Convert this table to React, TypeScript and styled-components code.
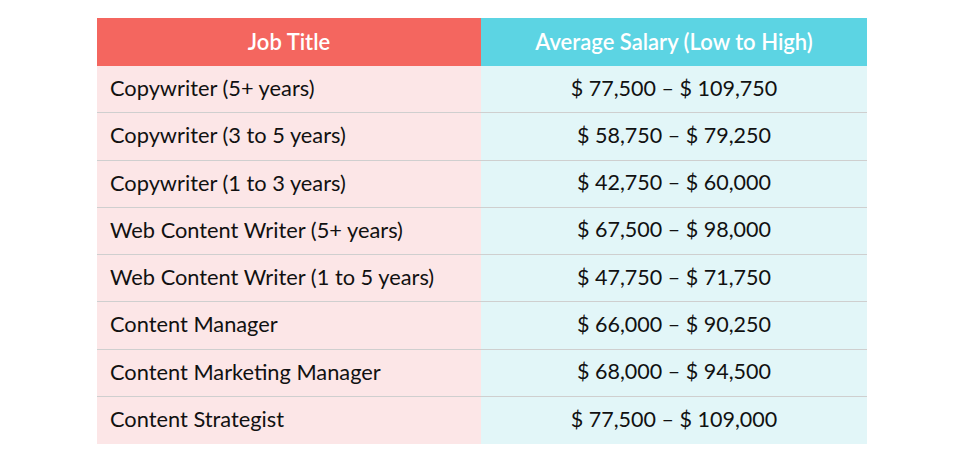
import React from "react";
import styled, { createGlobalStyle } from "styled-components";

const Global = createGlobalStyle`
  html, body { margin: 0; padding: 0; background: #ffffff; }
  body { font-family: Lato, "Open Sans", sans-serif; }
`;

const Page = styled.div`
  width: 964px;
  height: 464px;
  padding-top: 18px;
  box-sizing: border-box;
  display: flex;
  justify-content: flex-start;
  padding-left: 97px;
`;

const Table = styled.div`
  width: 770px;
  display: grid;
  grid-template-columns: 384px 386px;
  grid-template-rows: 48px repeat(8, 47.25px);
`;

const HeadCell = styled.div<{ $tone: "red" | "cyan" }>`
  background: ${(p) => (p.$tone === "red" ? "#f4665f" : "#5cd4e3")};
  color: #ffffff;
  font-weight: 600;
  font-size: 22px;
  display: flex;
  align-items: center;
  justify-content: center;
  padding-bottom: 2px;
  box-sizing: border-box;
`;

const Cell = styled.div<{ $tone: "red" | "cyan"; $last: boolean; $align: "left" | "center" }>`
  background: ${(p) => (p.$tone === "red" ? "#fce6e7" : "#e2f6f8")};
  color: #111111;
  font-size: ${(p) => (p.$align === "left" ? "21.8px" : "21.5px")};
  display: flex;
  align-items: center;
  justify-content: ${(p) => (p.$align === "left" ? "flex-start" : "center")};
  padding-left: ${(p) => (p.$align === "left" ? "13px" : "0")};
  padding-bottom: 3px;
  border-bottom: ${(p) => (p.$last ? "none" : "1.5px solid #cfcfcf")};
  box-sizing: border-box;
`;

const rows: [string, string][] = [
  ["Copywriter (5+ years)", "$ 77,500 – $ 109,750"],
  ["Copywriter (3 to 5 years)", "$ 58,750 – $ 79,250"],
  ["Copywriter (1 to 3 years)", "$ 42,750 – $ 60,000"],
  ["Web Content Writer (5+ years)", "$ 67,500 – $ 98,000"],
  ["Web Content Writer (1 to 5 years)", "$ 47,750 – $ 71,750"],
  ["Content Manager", "$ 66,000 – $ 90,250"],
  ["Content Marketing Manager", "$ 68,000 – $ 94,500"],
  ["Content Strategist", "$ 77,500 – $ 109,000"],
];

export default function App() {
  return (
    <>
      <Global />
      <Page>
        <Table>
          <HeadCell $tone="red">Job Title</HeadCell>
          <HeadCell $tone="cyan">Average Salary (Low to High)</HeadCell>
          {rows.map(([t, s], i) => (
            <React.Fragment key={t}>
              <Cell $tone="red" $last={i === rows.length - 1} $align="left">{t}</Cell>
              <Cell $tone="cyan" $last={i === rows.length - 1} $align="center">{s}</Cell>
            </React.Fragment>
          ))}
        </Table>
      </Page>
    </>
  );
}
